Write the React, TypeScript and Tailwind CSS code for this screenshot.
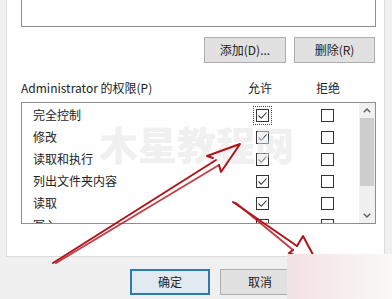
import React from "react";

const FONT = { fontFamily: '"Noto Sans CJK SC", "Noto Sans", sans-serif' };

const ROWS = [
  { label: "完全控制", allow: true, focus: true },
  { label: "修改", allow: true },
  { label: "读取和执行", allow: true },
  { label: "列出文件夹内容", allow: true },
  { label: "读取", allow: true },
  { label: "写入", allow: true },
];

function CheckBox({ checked, focus }: { checked?: boolean; focus?: boolean }) {
  return (
    <span
      className={[
        "flex h-[13px] w-[13px] shrink-0 items-center justify-center border border-[#333] bg-white",
        focus ? "outline-1 outline-offset-2 outline-dotted outline-[#444]" : "",
      ].join(" ")}
    >
      {checked && (
        <svg width="11" height="11" viewBox="0 0 11 11">
          <path d="M1.5 5.5 L4.3 8.3 L9.5 2.5" fill="none" stroke="#333" strokeWidth="1.1" />
        </svg>
      )}
    </span>
  );
}

function Button({ label, primary, width = "w-[80px]" }: { label: string; primary?: boolean; width?: string }) {
  return (
    <div
      className={[
        "flex h-[26px] shrink-0 items-center justify-center text-[12px] text-[#222]",
        width,
        primary ? "border-2 border-[#2f77ad] bg-[#e2eaf1]" : "border border-[#adadad] bg-[#e1e1e1]",
      ].join(" ")}
    >
      {label}
    </div>
  );
}

export default function App() {
  return (
    <div className="relative h-[299px] w-[392px] overflow-hidden bg-[#f0f0f0]" style={FONT}>
      {/* Security tab panel */}
      <div className="ml-[6px] flex h-[257px] w-[379px] flex-col border-x border-b border-[#dcdcdc] bg-white pl-[14px] pr-[9px]">
        {/* group / user names box (scrolled off top) */}
        <div className="h-[27px] w-[355px] border-x border-b border-[#8e8e8e] bg-white" />

        <div className="mt-[10px] flex justify-end gap-[8px]">
          <Button label="添加(D)..." width="w-[82px]" />
          <Button label="删除(R)" width="w-[81px]" />
        </div>

        {/* header */}
        <div className="mt-[17px] flex h-[16px] items-center text-[12px] text-[#222]">
          <span className="w-[218px]">Administrator 的权限(P)</span>
          <span className="w-[42px] text-center">允许</span>
          <span className="ml-[26px] w-[42px] text-center">拒绝</span>
        </div>

        {/* permission list */}
        <div className="mt-[6px] flex h-[122px] w-[355px] border border-[#8e8e8e] bg-white">
          <div className="flex-1 overflow-hidden pt-[1px]">
            {ROWS.map((r) => (
              <div key={r.label} className="flex h-[22px] items-center text-[12px] text-[#222]">
                <span className="w-[234px] pl-[11px]">{r.label}</span>
                <CheckBox checked={r.allow} focus={r.focus} />
                <span className="w-[52px]" />
                <CheckBox />
              </div>
            ))}
          </div>
          {/* scrollbar */}
          <div className="flex w-[16px] flex-col bg-[#f0f0f0]">
            <div className="flex h-[15px] items-center justify-center">
              <svg width="8" height="5" viewBox="0 0 8 5">
                <path d="M0.8 4.2 L4 1 L7.2 4.2" fill="none" stroke="#606060" strokeWidth="1.4" />
              </svg>
            </div>
            <div className="mx-[1px] h-[68px] bg-[#cdcdcd]" />
            <div className="flex-1" />
            <div className="flex h-[16px] items-center justify-center">
              <svg width="8" height="5" viewBox="0 0 8 5">
                <path d="M0.8 0.8 L4 4 L7.2 0.8" fill="none" stroke="#606060" strokeWidth="1.4" />
              </svg>
            </div>
          </div>
        </div>
      </div>

      {/* dialog buttons */}
      <div className="mt-[12px] flex gap-[10px] pl-[130px]">
        <Button label="确定" primary />
        <Button label="取消" />
        <Button label="应用(A)" />
      </div>

      {/* watermark */}
      <div
        className="pointer-events-none absolute left-[99px] top-[124px] text-[39px] font-black leading-none text-[rgba(228,228,228,0.55)]"
        style={FONT}
      >
        木星教程网
      </div>

      {/* red annotation arrows */}
      <svg className="pointer-events-none absolute left-0 top-0" width="392" height="299" viewBox="0 0 392 299">
        <g fill="none" stroke="#b0141a" strokeWidth="2" strokeLinecap="round" strokeLinejoin="round">
          <path d="M53 263 L216 160" />
          <path d="M56 263 L219 165" opacity="0.8" />
          <path d="M213 158 L207 156 L240 144 L221 172 L219 165" />
          <path d="M233 202 L297 246" />
          <path d="M236 203 L293 250" opacity="0.8" />
          <path d="M297 246 L303 236 L318 264 L289 253 L293 250" />
        </g>
      </svg>

      {/* watermark smudge bottom-right */}
      <div className="pointer-events-none absolute left-[287px] top-[254px] h-[45px] w-[105px] bg-gradient-to-r from-[#f2e2e2] to-[#fbf8f8]" />
    </div>
  );
}
